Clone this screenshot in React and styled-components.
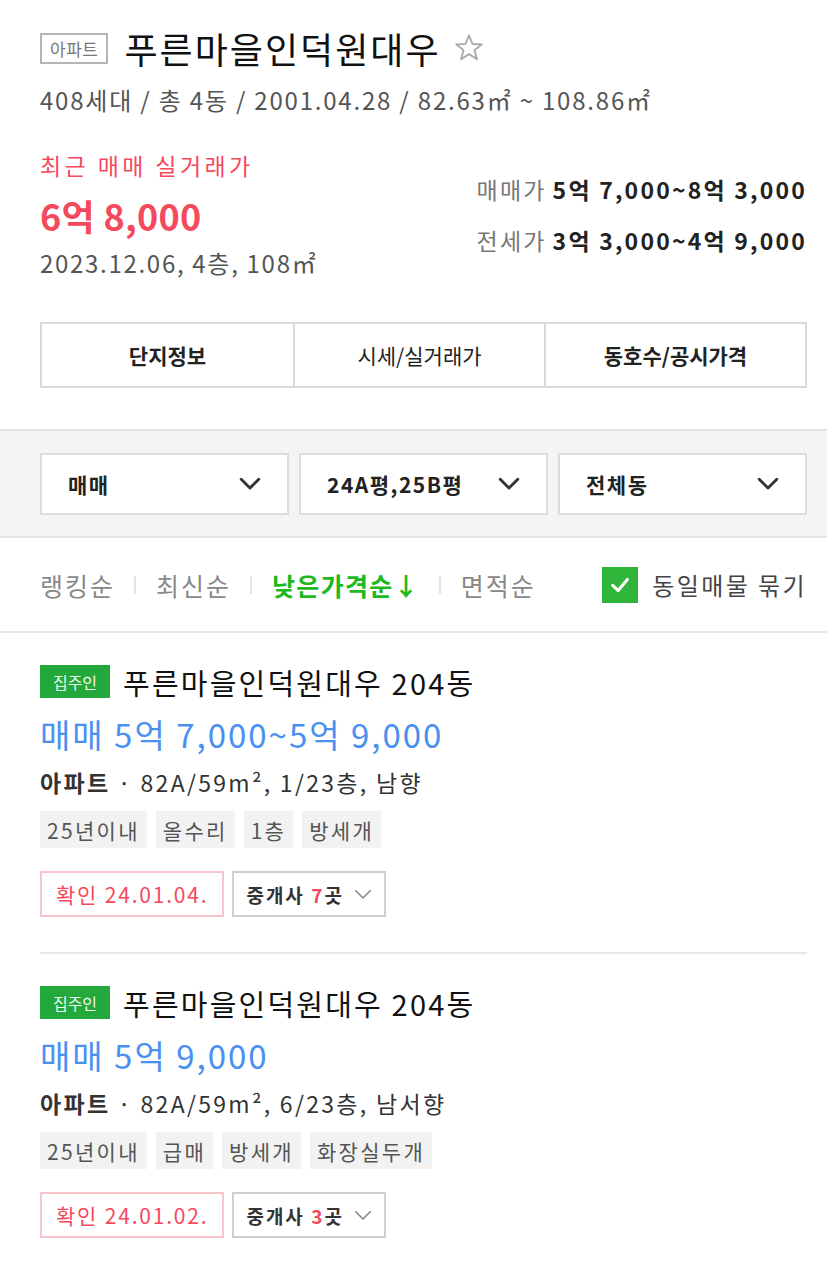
import React from "react";
import styled, { createGlobalStyle } from "styled-components";

const GlobalStyle = createGlobalStyle`
  body {
    margin: 0;
    background: #fff;
    font-family: "Noto Sans CJK KR", "Noto Sans", sans-serif;
    color: #222;
  }
`;

const Page = styled.div`
  width: 827px;
`;

const Header = styled.div`
  padding: 24px 20px 0 40px;
`;

const TitleRow = styled.div`
  display: flex;
  align-items: center;
  height: 48px;
`;

const TypeBadge = styled.span`
  display: inline-flex;
  align-items: center;
  height: 27px;
  padding: 0 8px;
  border: 2px solid #b5b5b5;
  color: #777;
  font-size: 17px;
  letter-spacing: 0.5px;
  margin-right: 16px;
`;

const Title = styled.h1`
  margin: 0;
  font-size: 36px;
  font-weight: normal;
  color: #111;
  line-height: 48px;
  letter-spacing: 2px;
  margin-right: 12px;
`;

const Summary = styled.div`
  margin-top: 11px;
  font-size: 24px;
  line-height: 34px;
  color: #555;
  letter-spacing: 1.8px;
`;

const PriceArea = styled.div`
  display: flex;
  justify-content: space-between;
  align-items: center;
  margin-top: 32px;
`;

const RecentLabel = styled.div`
  font-size: 23px;
  line-height: 32px;
  color: #f5495e;
  letter-spacing: 3.4px;
`;

const RecentPrice = styled.div`
  margin-top: 12px;
  font-size: 36px;
  line-height: 44px;
  font-weight: bold;
  color: #f5495e;
  letter-spacing: 0.3px;
`;

const RecentInfo = styled.div`
  margin-top: 10px;
  font-size: 24px;
  line-height: 32px;
  color: #555;
  letter-spacing: 1.7px;
`;

const RangeList = styled.div`
  display: flex;
  flex-direction: column;
  align-items: flex-end;
  gap: 19px;
`;

const RangeLine = styled.div`
  font-size: 23px;
  line-height: 32px;
  color: #777;
  letter-spacing: 2.2px;

  b {
    color: #222;
    margin-left: 6px;
  }
`;

const Tabs = styled.div`
  display: grid;
  grid-template-columns: 1fr 1fr 1.04fr;
  margin-top: 43px;
  border: 2px solid #d9d9d9;
  height: 62px;
`;

const Tab = styled.div`
  display: flex;
  align-items: center;
  justify-content: center;
  font-size: 21px;
  color: #222;
  font-weight: ${(p) => (p.strong ? "bold" : "normal")};
  border-left: ${(p) => (p.first ? "none" : "2px solid #d9d9d9")};
`;

const FilterBand = styled.div`
  margin-top: 41px;
  background: #f4f4f4;
  border-top: 2px solid #e4e4e4;
  border-bottom: 2px solid #e4e4e4;
  padding: 22px 20px 21px 40px;
  display: grid;
  grid-template-columns: repeat(3, 1fr);
  gap: 10px;
`;

const Select = styled.div`
  height: 58px;
  background: #fff;
  border: 2px solid #dcdcdc;
  display: flex;
  align-items: center;
  justify-content: space-between;
  padding: 0 26px;
  font-size: 21px;
  font-weight: bold;
  color: #222;
  letter-spacing: 1.5px;
`;

const SortRow = styled.div`
  height: 93px;
  display: flex;
  align-items: center;
  justify-content: space-between;
  padding: 0 20px 0 40px;
  border-bottom: 2px solid #e8e8e8;
`;

const SortOptions = styled.div`
  display: flex;
  align-items: center;
`;

const SortItem = styled.span`
  font-size: 25px;
  color: ${(p) => (p.active ? "#1db91d" : "#888")};
  font-weight: ${(p) => (p.active ? "bold" : "normal")};
  letter-spacing: ${(p) => (p.active ? 1.3 : 2)}px;
`;

const SortDivider = styled.span`
  width: 2px;
  height: 18px;
  background: #e3e3e3;
  margin: 0 20px 0 19px;
`;

const CheckLabel = styled.label`
  display: flex;
  align-items: center;
  gap: 14px;
  font-size: 24px;
  color: #444;
  letter-spacing: 2.4px;
`;

const CheckBox = styled.span`
  width: 36px;
  height: 36px;
  background: #2fb53a;
  display: inline-flex;
  align-items: center;
  justify-content: center;
`;

const List = styled.div`
  padding: 0 20px 0 40px;
`;

const Item = styled.div`
  padding: 32px 0 ${(p) => (p.last ? 20 : 35)}px;
  border-bottom: ${(p) => (p.last ? "none" : "2px solid #e8e8e8")};
`;

const ItemTitleRow = styled.div`
  display: flex;
  align-items: center;
  height: 33px;
`;

const OwnerBadge = styled.span`
  display: inline-flex;
  align-items: center;
  justify-content: center;
  width: 70px;
  height: 33px;
  background: #23a93b;
  color: #eef9ef;
  font-size: 16px;
  margin-right: 13px;
`;

const ItemTitle = styled.div`
  font-size: 29px;
  color: #111;
  letter-spacing: 2.2px;
`;

const ItemPrice = styled.div`
  margin-top: 14px;
  font-size: 33px;
  line-height: 44px;
  color: #4a90f0;
  letter-spacing: 2px;
`;

const ItemInfo = styled.div`
  margin-top: 10px;
  font-size: 23px;
  line-height: 32px;
  color: #333;
  letter-spacing: 2.3px;

  b {
    font-weight: bold;
  }
`;

const Tags = styled.div`
  display: flex;
  gap: 9px;
  margin-top: 13px;
`;

const Tag = styled.span`
  height: 37px;
  padding: 0 7px;
  display: inline-flex;
  align-items: center;
  background: #f2f2f2;
  color: #555;
  font-size: 21px;
  letter-spacing: 2.3px;
`;

const Actions = styled.div`
  display: flex;
  gap: 8px;
  margin-top: 23px;
`;

const ConfirmBox = styled.span`
  height: 42px;
  padding: 0 14px;
  display: inline-flex;
  align-items: center;
  border: 2px solid #f9c5cc;
  color: #f5495e;
  font-size: 21px;
  letter-spacing: 1.8px;
`;

const AgentButton = styled.span`
  height: 42px;
  padding: 0 12px;
  display: inline-flex;
  align-items: center;
  gap: 10px;
  border: 2px solid #cfcfcf;
  font-size: 19px;
  font-weight: bold;
  color: #333;
  letter-spacing: 2px;

  em {
    font-style: normal;
    color: #f5495e;
  }
`;

const Chevron = ({ size = 22, color = "#333", width = 2.6 }) => (
  <svg width={size} height={size * 0.6} viewBox="0 0 20 12">
    <polyline
      points="2,2 10,10 18,2"
      fill="none"
      stroke={color}
      strokeWidth={width}
      strokeLinecap="round"
      strokeLinejoin="round"
    />
  </svg>
);

const Star = () => (
  <svg width="32" height="32" viewBox="0 0 24 24">
    <polygon
      points="12,2.5 14.6,9 21.5,9.3 16.1,13.6 18,20.5 12,16.6 6,20.5 7.9,13.6 2.5,9.3 9.4,9"
      fill="none"
      stroke="#aaa"
      strokeWidth="1.4"
      strokeLinejoin="round"
    />
  </svg>
);

const listings = [
  {
    price: "매매 5억 7,000~5억 9,000",
    info: "82A/59m², 1/23층, 남향",
    tags: ["25년이내", "올수리", "1층", "방세개"],
    date: "24.01.04.",
    agents: 7,
  },
  {
    price: "매매 5억 9,000",
    info: "82A/59m², 6/23층, 남서향",
    tags: ["25년이내", "급매", "방세개", "화장실두개"],
    date: "24.01.02.",
    agents: 3,
  },
];

export default function App() {
  return (
    <Page>
      <GlobalStyle />
      <Header>
        <TitleRow>
          <TypeBadge>아파트</TypeBadge>
          <Title>푸른마을인덕원대우</Title>
          <Star />
        </TitleRow>
        <Summary>408세대 / 총 4동 / 2001.04.28 / 82.63㎡ ~ 108.86㎡</Summary>
        <PriceArea>
          <div>
            <RecentLabel>최근 매매 실거래가</RecentLabel>
            <RecentPrice>6억 8,000</RecentPrice>
            <RecentInfo>2023.12.06, 4층, 108㎡</RecentInfo>
          </div>
          <RangeList>
            <RangeLine>
              매매가<b>5억 7,000~8억 3,000</b>
            </RangeLine>
            <RangeLine>
              전세가<b>3억 3,000~4억 9,000</b>
            </RangeLine>
          </RangeList>
        </PriceArea>
        <Tabs>
          <Tab first strong>
            단지정보
          </Tab>
          <Tab>시세/실거래가</Tab>
          <Tab strong>동호수/공시가격</Tab>
        </Tabs>
      </Header>

      <FilterBand>
        <Select>
          매매
          <Chevron />
        </Select>
        <Select>
          24A평,25B평
          <Chevron />
        </Select>
        <Select>
          전체동
          <Chevron />
        </Select>
      </FilterBand>

      <SortRow>
        <SortOptions>
          <SortItem>랭킹순</SortItem>
          <SortDivider />
          <SortItem>최신순</SortItem>
          <SortDivider />
          <SortItem active>낮은가격순↓</SortItem>
          <SortDivider />
          <SortItem>면적순</SortItem>
        </SortOptions>
        <CheckLabel>
          <CheckBox>
            <svg width="22" height="22" viewBox="0 0 24 24">
              <polyline
                points="4,12.5 10,18 20,6"
                fill="none"
                stroke="#fff"
                strokeWidth="3.4"
                strokeLinecap="round"
                strokeLinejoin="round"
              />
            </svg>
          </CheckBox>
          동일매물 묶기
        </CheckLabel>
      </SortRow>

      <List>
        {listings.map((l, i) => (
          <Item key={i} last={i === listings.length - 1}>
            <ItemTitleRow>
              <OwnerBadge>집주인</OwnerBadge>
              <ItemTitle>푸른마을인덕원대우 204동</ItemTitle>
            </ItemTitleRow>
            <ItemPrice>{l.price}</ItemPrice>
            <ItemInfo>
              <b>아파트</b> · {l.info}
            </ItemInfo>
            <Tags>
              {l.tags.map((t) => (
                <Tag key={t}>{t}</Tag>
              ))}
            </Tags>
            <Actions>
              <ConfirmBox>확인 {l.date}</ConfirmBox>
              <AgentButton>
                <span>
                  중개사 <em>{l.agents}</em>곳
                </span>
                <Chevron size={18} color="#888" width={1.8} />
              </AgentButton>
            </Actions>
          </Item>
        ))}
      </List>
    </Page>
  );
}
